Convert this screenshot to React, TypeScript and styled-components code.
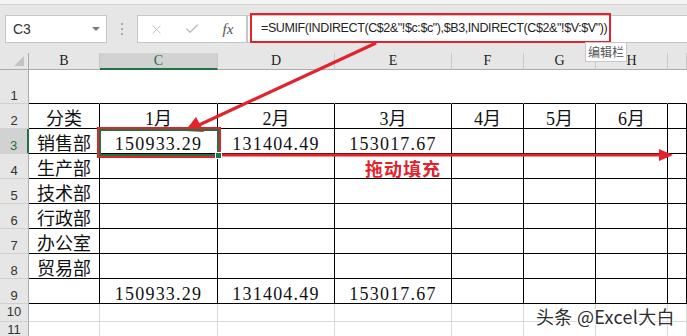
import React from "react";
import styled, { createGlobalStyle } from "styled-components";
import { X, Check } from "lucide-react";

const GlobalStyle = createGlobalStyle`
  html, body {
    margin: 0;
    padding: 0;
    background: #fff;
  }
  body {
    width: 687px;
    height: 336px;
    overflow: hidden;
  }
`;

const RED = "#e3232c";
const GREEN = "#217346";

// column widths: row header, B..H, I
const colWidths = "29px 71px 118px 117px 117px 72px 72px 72px 1fr";
const colLetters = ["B", "C", "D", "E", "F", "G", "H", "I"];

const depts = ["分类", "销售部", "生产部", "技术部", "行政部", "办公室", "贸易部", ""];
const months = ["1月", "2月", "3月", "4月", "5月", "6月", ""];
const totals = ["150933.29", "131404.49", "153017.67"];

const formula = '=SUMIF(INDIRECT(C$2&"!$c:$c"),$B3,INDIRECT(C$2&"!$V:$V"))';

const App = () => {
  // rows 1..11
  const rowHeights = [34, 25, 25, 25, 25, 25, 25, 25, 25, 18, 18];

  const cellFor = (row: number, col: number) => {
    // col: 0 = B ... 7 = I
    if (row === 1) return { text: "", line: "top" as const };
    if (row >= 2 && row <= 9) {
      let text = "";
      let num = false;
      if (col === 0) text = depts[row - 2];
      else if (row === 2) text = months[col - 1];
      else if ((row === 3 || row === 9) && col <= 3) {
        text = totals[col - 1];
        num = true;
      }
      return { text, line: "box" as const, num };
    }
    return { text: "", line: "grid" as const };
  };

  return (
    <Page>
      <GlobalStyle />
      <TopStrip />
      <FormulaRow>
        <NameBox>
          <span>C3</span>
          <Caret />
        </NameBox>
        <Grip>
          <Dot />
          <Dot />
          <Dot />
        </Grip>
        <FxBox>
          <ToolIcon>
            <X size={15} strokeWidth={1.4} />
          </ToolIcon>
          <ToolIcon>
            <Check size={16} strokeWidth={2} />
          </ToolIcon>
          <FxLabel>fx</FxLabel>
        </FxBox>
        <FormulaInput>
          <Highlight>{formula}</Highlight>
        </FormulaInput>
      </FormulaRow>

      <Sheet style={{ gridTemplateRows: `17px ${rowHeights.map((h) => h + "px").join(" ")}` }}>
        <Corner>
          <CornerTri />
        </Corner>
        {colLetters.map((l) => (
          <ColHead key={l} $active={l === "C"}>
            {l === "I" ? "" : l}
          </ColHead>
        ))}
        {rowHeights.map((_, i) => {
          const row = i + 1;
          return (
            <React.Fragment key={row}>
              <RowHead $active={row === 3} $tight={row >= 10}>
                {row}
              </RowHead>
              {colLetters.map((l, c) => {
                const cell = cellFor(row, c);
                return (
                  <Cell key={l} $line={cell.line} $num={!!cell.num}>
                    {cell.text}
                  </Cell>
                );
              })}
            </React.Fragment>
          );
        })}
      </Sheet>

      <Arrows width="687" height="336" viewBox="0 0 687 336">
        <line x1="376" y1="43" x2="199" y2="125" stroke={RED} strokeWidth="3.2" />
        <polygon points="185,131 196,117 204,132" fill={RED} />
        <line x1="221" y1="155" x2="662" y2="155" stroke={RED} strokeWidth="3.2" />
        <polygon points="673,155 659,149 659,161" fill={RED} />
      </Arrows>

      <RedFrame>
        <GreenFrame>
          <FillHandle />
        </GreenFrame>
      </RedFrame>

      <DragNote>拖动填充</DragNote>
      <Tooltip>编辑栏</Tooltip>
      <Watermark>头条 @Excel大白</Watermark>
    </Page>
  );
};

const Page = styled.div`
  position: relative;
  width: 687px;
  height: 336px;
  overflow: hidden;
  background: #fff;
`;

const TopStrip = styled.div`
  height: 4px;
  background: #f3f3f3;
  border-bottom: 1px solid #d5d5d5;
`;

const FormulaRow = styled.div`
  display: flex;
  align-items: center;
  height: 48px;
  padding-left: 5px;
  box-sizing: border-box;
  background: #e6e6e6;
`;

const NameBox = styled.div`
  width: 102px;
  height: 28px;
  box-sizing: border-box;
  background: #fff;
  border: 1px solid #c6c6c6;
  display: flex;
  align-items: center;
  justify-content: space-between;
  padding: 0 6px 0 7px;
  font-family: "Liberation Sans", Arial, sans-serif;
  font-size: 14px;
  color: #333;
`;

const Caret = styled.div`
  width: 0;
  height: 0;
  border-left: 4px solid transparent;
  border-right: 4px solid transparent;
  border-top: 4px solid #7a7a7a;
`;

const Grip = styled.div`
  width: 30px;
  display: flex;
  flex-direction: column;
  align-items: center;
  gap: 3px;
`;

const Dot = styled.div`
  width: 2px;
  height: 2px;
  background: #aaa;
`;

const FxBox = styled.div`
  width: 110px;
  height: 28px;
  box-sizing: border-box;
  background: #fff;
  border: 1px solid #c6c6c6;
  display: grid;
  grid-template-columns: repeat(3, 36px);
  align-items: center;
  justify-items: center;
`;

const ToolIcon = styled.div`
  display: flex;
  color: #bcbcbc;
`;

const FxLabel = styled.span`
  font-family: "Liberation Serif", "Times New Roman", serif;
  font-style: italic;
  font-size: 15px;
  color: #555;
`;

const FormulaInput = styled.div`
  flex: 1;
  height: 28px;
  box-sizing: border-box;
  background: #fff;
  border: 1px solid #c6c6c6;
  border-right: none;
  display: flex;
  align-items: center;
  padding-left: 2px;
`;

const Highlight = styled.div`
  width: 361px;
  height: 30px;
  margin-top: -3px;
  box-sizing: border-box;
  border: 2px solid ${RED};
  display: flex;
  align-items: center;
  padding: 0 0 0 9px;
  font-family: "Liberation Sans", Arial, sans-serif;
  font-size: 12.5px;
  letter-spacing: -0.4px;
  color: #222;
  white-space: nowrap;
  overflow: hidden;
`;

const Sheet = styled.div`
  display: grid;
  grid-template-columns: ${colWidths};
`;

const Corner = styled.div`
  position: relative;
  background: #e6e6e6;
  border-right: 1px solid #ababab;
  border-bottom: 1px solid #ababab;
  box-sizing: border-box;
`;

const CornerTri = styled.div`
  position: absolute;
  right: 4px;
  bottom: 3px;
  width: 0;
  height: 0;
  border-left: 10px solid transparent;
  border-bottom: 10px solid #c4c4c4;
`;

const ColHead = styled.div<{ $active?: boolean }>`
  box-sizing: border-box;
  background: ${(p) => (p.$active ? "#d2d2d2" : "#e6e6e6")};
  border-right: 1px solid #c9c9c9;
  border-bottom: ${(p) => (p.$active ? `2px solid ${GREEN}` : "1px solid #ababab")};
  color: ${(p) => (p.$active ? GREEN : "#222")};
  font-family: "Liberation Serif", "Times New Roman", serif;
  font-size: 14px;
  line-height: 16px;
  text-align: center;
`;

const RowHead = styled.div<{ $active?: boolean; $tight?: boolean }>`
  box-sizing: border-box;
  background: ${(p) => (p.$active ? "#d2d2d2" : "#e6e6e6")};
  border-right: ${(p) => (p.$active ? `2px solid ${GREEN}` : "1px solid #ababab")};
  border-bottom: 1px solid #d0d0d0;
  color: ${(p) => (p.$active ? GREEN : "#333")};
  font-family: "Liberation Sans", Arial, sans-serif;
  font-size: 13px;
  line-height: 13px;
  display: flex;
  align-items: flex-end;
  justify-content: center;
  padding-bottom: ${(p) => (p.$tight ? "3px" : "1px")};
`;

const lineColors = {
  top: { right: "transparent", bottom: "#000" },
  box: { right: "#000", bottom: "#000" },
  grid: { right: "#d9d9d9", bottom: "#d9d9d9" },
};

const Cell = styled.div<{ $line: "top" | "box" | "grid"; $num?: boolean }>`
  box-sizing: border-box;
  border-right: 1px solid ${(p) => lineColors[p.$line].right};
  border-bottom: 1px solid ${(p) => lineColors[p.$line].bottom};
  display: flex;
  align-items: flex-end;
  justify-content: center;
  font-family: "Liberation Serif", "Noto Sans CJK SC", serif;
  font-size: 18px;
  line-height: 18px;
  color: #111;
  letter-spacing: ${(p) => (p.$num ? "1.2px" : "0")};
  white-space: nowrap;
`;

const Arrows = styled.svg`
  position: absolute;
  left: 0;
  top: 0;
  pointer-events: none;
`;

const RedFrame = styled.div`
  position: absolute;
  left: 97px;
  top: 127px;
  width: 124px;
  height: 31px;
  box-sizing: border-box;
  border: 2px solid ${RED};
  display: flex;
`;

const GreenFrame = styled.div`
  position: relative;
  flex: 1;
  border: 2px solid ${GREEN};
`;

const FillHandle = styled.div`
  position: absolute;
  right: -5px;
  bottom: -5px;
  width: 5px;
  height: 5px;
  background: ${GREEN};
  border: 1px solid #fff;
`;

const DragNote = styled.div`
  position: absolute;
  left: 365px;
  top: 156px;
  font-family: "Noto Sans CJK SC", sans-serif;
  font-weight: 700;
  font-size: 18px;
  line-height: 24px;
  color: ${RED};
  letter-spacing: 1px;
`;

const Tooltip = styled.div`
  position: absolute;
  left: 585px;
  top: 42px;
  padding: 0 2px;
  background: #fff;
  border: 1px solid #c8c8c8;
  font-family: "Noto Sans CJK SC", sans-serif;
  font-size: 12px;
  line-height: 18px;
  color: #555;
`;

const Watermark = styled.div`
  position: absolute;
  left: 536px;
  top: 304px;
  font-family: "Noto Sans CJK SC", sans-serif;
  font-size: 18px;
  line-height: 24px;
  letter-spacing: 0.3px;
  color: #2e2e2e;
  text-shadow: 1px 1px 0 #fff, -1px -1px 0 #fff, 1px -1px 0 #fff, -1px 1px 0 #fff;
  white-space: nowrap;
`;

export default App;
